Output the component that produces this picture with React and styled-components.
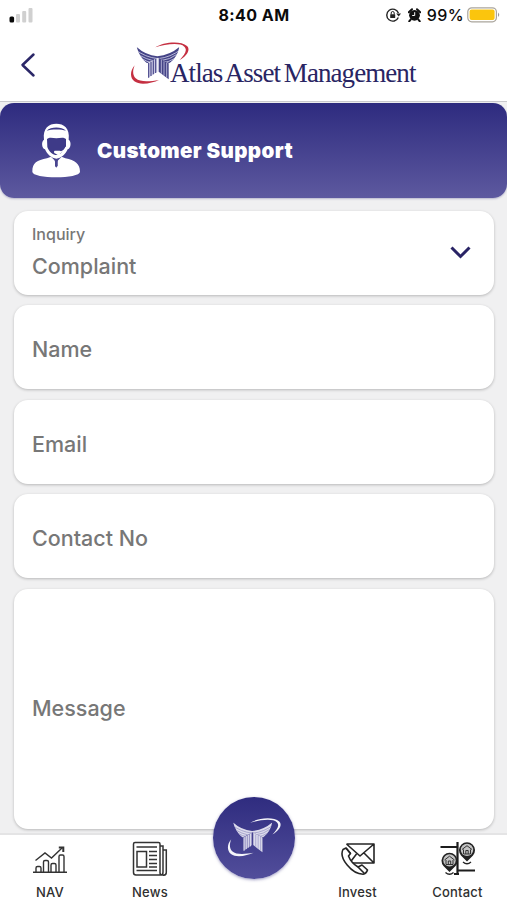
import React from "react";
import styled, { createGlobalStyle } from "styled-components";

const GlobalStyle = createGlobalStyle`
  * {
    box-sizing: border-box;
  }
  body {
    margin: 0;
    background: #f0f0f1;
    font-family: Inter, "Liberation Sans", sans-serif;
  }
  svg {
    display: block;
    flex: none;
  }
`;

const Screen = styled.div`
  width: 507px;
  height: 900px;
  display: flex;
  flex-direction: column;
  overflow: hidden;
`;

const Top = styled.header`
  height: 102px;
  flex: none;
  background: #fff;
  border-bottom: 1px solid #c9c9cd;
`;

const StatusBar = styled.div`
  height: 30px;
  display: grid;
  grid-template-columns: 1fr auto 1fr;
  align-items: center;
  padding: 0 8px 0 9px;
  color: #0b0b0b;
`;

const Time = styled.span`
  font-size: 16px;
  font-weight: 700;
  letter-spacing: 0.45px;
`;

const StatusRight = styled.div`
  display: flex;
  justify-content: flex-end;
  align-items: center;
  font-size: 16px;
  font-weight: 500;
  letter-spacing: 0.4px;
  svg:first-child {
    margin-right: 7px;
  }
  svg:last-child {
    margin-right: -1px;
  }
  span {
    margin: 0 3px 0 6px;
  }
`;

const NavBar = styled.div`
  height: 71px;
  display: flex;
  align-items: center;
  padding: 0 0 0 20px;
`;

const BackButton = styled.button`
  width: 16px;
  height: 26px;
  padding: 0;
  border: 0;
  background: none;
  margin-bottom: 1px;
`;

const Logo = styled.div`
  display: flex;
  align-items: flex-start;
  height: 50px;
  margin: 0 0 0 94px;
`;

const LogoText = styled.span`
  font-family: "Liberation Serif", serif;
  font-size: 27px;
  line-height: 28px;
  letter-spacing: -0.93px;
  word-spacing: -2px;
  color: #292563;
  white-space: nowrap;
  margin: 18px 0 0 -20px;
`;

const Banner = styled.section`
  height: 95px;
  flex: none;
  margin-top: 1px;
  display: flex;
  align-items: center;
  gap: 16px;
  padding-left: 31px;
  border-radius: 14px;
  background: linear-gradient(#2e2b7f, #5d599f);
  box-shadow: 0 1px 2px rgba(50, 45, 120, 0.3);
`;

const BannerTitle = styled.h1`
  margin: 0;
  font-size: 20.5px;
  font-weight: 900;
  letter-spacing: 0.37px;
  color: #fff;
`;

const Form = styled.main`
  flex: 1;
  display: flex;
  flex-direction: column;
  gap: 10.6px;
  padding: 13px 13.5px 0;
`;

const Field = styled.div`
  height: ${({ $tall }) => ($tall ? "240px" : "83.8px")};
  flex: none;
  display: flex;
  align-items: center;
  justify-content: space-between;
  padding: ${({ $tall }) => ($tall ? "0 23px 2px 18.5px" : "4px 23px 0 18.5px")};
  border-radius: 14px;
  background: #fff;
  box-shadow: 0 1px 3px rgba(0, 0, 0, 0.24);
  color: #777;
  font-size: 21.5px;
  font-weight: 500;
  svg {
    margin-top: -3px;
  }
`;

const Stack = styled.div`
  display: flex;
  flex-direction: column;
  line-height: 28px;
  small {
    font-size: 16px;
    line-height: 20px;
    margin-bottom: 8px;
    margin-top: -6px;
  }
`;

const TabBar = styled.nav`
  height: 67px;
  flex: none;
  display: grid;
  grid-template-columns: 100px 100px 107px 101px 99px;
  background: #fff;
  border-top: 2px solid #e4e4e5;
  position: relative;
`;

const Tab = styled.div`
  display: flex;
  flex-direction: column;
  align-items: center;
  padding-top: 6px;
  font-size: 13px;
  font-weight: 500;
  line-height: 16px;
  letter-spacing: 0.2px;
  color: #303030;
  svg {
    margin-bottom: 8px;
  }
`;

const HomeButton = styled.button`
  width: 82px;
  height: 82px;
  margin: -38px auto 0;
  padding: 0 0 0 1px;
  border: 0;
  border-radius: 50%;
  display: flex;
  align-items: center;
  justify-content: center;
  background: linear-gradient(#2f2c7f, #524e9b);
  box-shadow: 0 1px 3px rgba(70, 65, 140, 0.5);
`;

function EagleMark({ id, width, color, stripe, ring }) {
  return (
    <svg width={width} height={width * 0.75} viewBox="0 0 180 135">
      <defs>
        <clipPath id={id}>
          <path d="M20 18Q46 42 82 46Q120 42 148 18Q142 49 118 67L84 50L51 67Q29 50 20 18Z" />
        </clipPath>
      </defs>
      <g clipPath={`url(#${id})`}>
        <path d="M0 0H180V135H0Z" fill={color} />
        <path
          d="M15 25Q45 49 84 53Q122 49 153 25M17 35Q47 57 84 61Q120 57 150 35M20 45Q50 65 84 69Q117 65 148 45M26 55Q52 72 84 76Q115 72 144 55"
          fill="none"
          stroke={stripe}
          strokeWidth="2.6"
        />
      </g>
      <path d="M54 67L82 51V92L54 111Z" fill={stripe} />
      <path d="M86 51L116 67V115L86 92Z" fill={color} />
      <path d="M56 66V110M63 62V105M70 58V100M77 54V96" stroke={color} strokeWidth="3.2" />
      <path d="M94 57V98M102 61V104M110 65V110" stroke={stripe} strokeWidth="2.4" />
      <g fill={ring}>
        <path d="M76 19C98 4 151-3 171 15C183 27 169 45 149 57C163 42 174 28 163 17C148 3 103 11 76 19Z" />
        <path d="M14 73C0 89-1 110 13 121C31 135 67 126 87 117C62 121 31 125 17 112C7 102 8 88 14 73Z" />
      </g>
    </svg>
  );
}

function SignalIcon() {
  return (
    <svg width="26" height="18" viewBox="0 0 26 18">
      <rect x="0.5" y="10.5" width="4.6" height="6" rx="1.5" fill="#080808" />
      <g fill="#d0d0d0">
        <rect x="7" y="8" width="4" height="8.5" rx="1" />
        <rect x="13.2" y="5" width="4" height="11.5" rx="1" />
        <rect x="19.5" y="2" width="4" height="14.5" rx="1" />
      </g>
    </svg>
  );
}

function LockIcon() {
  return (
    <svg width="15" height="14" viewBox="0 0 15 14" fill="none" stroke="#222">
      <path d="M12.4 5A6 6 0 1 0 12.3 9.5" strokeWidth="1.4" />
      <path d="M10.2 5.5H15L12.7 8.5Z" fill="#222" stroke="none" />
      <rect x="4.2" y="6.2" width="5" height="3.8" rx="0.5" fill="#222" stroke="none" />
      <path d="M5.2 6.5V5a1.5 1.5 0 0 1 3 0v1.5" />
    </svg>
  );
}

function AlarmIcon() {
  return (
    <svg width="13" height="14" viewBox="0 0 13 14">
      <circle cx="6.5" cy="7.3" r="5.4" fill="#111" />
      <path d="M.8 4.3L4 1.2M12.2 4.3L9 1.2M2.8 11.3L1.2 13.3M10.2 11.3L11.8 13.3" stroke="#111" strokeWidth="2" strokeLinecap="round" />
      <path d="M6.7 4.2V7.5H4.2" fill="none" stroke="#fff" strokeWidth="1" />
    </svg>
  );
}

function BatteryIcon() {
  return (
    <svg width="33" height="16" viewBox="0 0 33 16">
      <rect x="0.8" y="0.8" width="28.6" height="14" rx="4" fill="#fff" stroke="#aaa59c" strokeWidth="1.2" />
      <rect x="2.6" y="2.6" width="25" height="10.4" rx="2" fill="#fbc50d" />
      <path d="M31 5.5Q33.5 7.8 31 10Z" fill="#999" />
    </svg>
  );
}

function AgentIcon() {
  return (
    <svg width="50" height="56" viewBox="0 0 150 168">
      <path d="M4 146C4 119 18 112 48 106L60 101L72 113V130H80V113L92 101L103 106C132 112 147 122 147 146C147 168 4 168 4 146Z" fill="#fff" />
      <path d="M70 108H82L79 116V129L76 134L72 129V116Z" fill="#49458f" />
      <path d="M39 50C35 14 54 2 76 2S117 14 113 50C121 54 121 75 110 79C104 93 90 107 76 107S48 93 42 79C31 75 31 54 39 50Z" fill="#fff" />
      <path d="M48 48C57 41 66 46 76 46S96 41 105 48V70C101 80 94 88 86 93C92 92 92 84 86 83H71C67 86 69 91 74 92L80 96C68 98 53 86 49 72Z" fill="#3e3a88" />
      <path d="M47 23C59 11 91 10 105 23C91 18 61 18 47 23Z" fill="#3e3a88" />
      <path d="M105 73Q99 87 84 88" fill="none" stroke="#fff" strokeWidth="4" />
    </svg>
  );
}

function NavChartIcon() {
  return (
    <svg width="36" height="35" viewBox="0 0 36 35" fill="none" stroke="#333" strokeWidth="1.4">
      <path d="M1 31.3H35M4 31V27Q4 25.5 5.5 25.5H7.5Q9 25.5 9 27V31M11.5 31V21Q11.5 19.5 13 19.5H15Q16.5 19.5 16.5 21V31M19 31V24Q19 22.5 20.5 22.5H22.5Q24 22.5 24 24V31M27 31V15.5Q27 14 28.5 14H30.5Q32 14 32 15.5V31" />
      <path d="M3.5 19.5L13 12L19.5 17L30 7" />
      <path d="M26.8 6.5H31.3V11" strokeWidth="2" />
    </svg>
  );
}

function NewsIcon() {
  return (
    <svg width="36" height="35" viewBox="0 0 36 35" fill="none" stroke="#333" strokeWidth="1.5">
      <path d="M3 1.5H26.5Q28 1.5 28 3V32Q28 34 31 34H4Q1.5 34 1.5 31.5V3Q1.5 1.5 3 1.5ZM28 5H31V31Q31 34 29 34M31 9H34.3V31.5Q34.3 34.3 31 34.3" />
      <rect x="5" y="10.5" width="9.5" height="15.5" />
      <path d="M4.5 6H25M17 10.5H25M17 14.5H25M17 18.5H25M17 22.5H25M17 26H25M4.5 29.5H25" />
    </svg>
  );
}

function InvestIcon() {
  return (
    <svg width="36" height="35" viewBox="0 0 36 35" fill="none" stroke="#252525" strokeWidth="1.6" strokeLinejoin="round">
      <path d="M6.5 3H34V22H10L8.5 16.5M6.5 3L20 15L34 3M10 21.5L16.5 13M34 22L24 12" />
      <path d="M6 7L3 8.5C-1.5 17 12 33 23 33.2Q26.5 32.5 27.5 29L22 24L18 26C13 23 10 19 8.5 15L10.5 12.5Z" fill="#fff" />
      <path d="M6 7L10.5 12.5M18 26L24 32" />
    </svg>
  );
}

function MapPin({ x, y }) {
  return (
    <g transform={`translate(${x} ${y})`}>
      <path d="M0 17L-6 11A8 8 0 1 1 6 11Z" fill="#222" />
      <circle cy="5.4" r="6.2" fill="#c4c4c4" />
      <path d="M-5 5L0 1.2L5 5M-3.5 5V9.5H3.5V5M-1.2 9.5V6H1.2V9.5" fill="none" stroke="#333" strokeWidth="1" />
      <path d="M-4 17.5Q0 21 4 17.5" fill="none" stroke="#222" strokeWidth="1.3" />
    </g>
  );
}

function ContactIcon() {
  return (
    <svg width="36" height="35" viewBox="0 0 36 35">
      <path d="M.5 6H18.5M17.5 1V33M17.5 29.5H35M14 33H19" fill="none" stroke="#1d1d1d" strokeWidth="2.2" />
      <MapPin x={9.5} y={14} />
      <MapPin x={27} y={3.5} />
    </svg>
  );
}

export default function App() {
  return (
    <>
      <GlobalStyle />
      <Screen>
        <Top>
          <StatusBar>
            <SignalIcon />
            <Time>8:40 AM</Time>
            <StatusRight>
              <LockIcon />
              <AlarmIcon />
              <span>99%</span>
              <BatteryIcon />
            </StatusRight>
          </StatusBar>
          <NavBar>
            <BackButton aria-label="Back">
              <svg width="16" height="26" viewBox="0 0 16 26">
                <path d="M13.5 2.5L2.5 13L13.5 23.5" fill="none" stroke="#2b2768" strokeWidth="2.5" strokeLinecap="round" strokeLinejoin="round" />
              </svg>
            </BackButton>
            <Logo>
              <EagleMark id="logo" width={60} color="#454487" stripe="#c9c8e4" ring="#c52f41" />
              <LogoText>Atlas Asset Management</LogoText>
            </Logo>
          </NavBar>
        </Top>
        <Banner>
          <AgentIcon />
          <BannerTitle>Customer Support</BannerTitle>
        </Banner>
        <Form>
          <Field>
            <Stack>
              <small>Inquiry</small>
              Complaint
            </Stack>
            <svg width="21" height="14" viewBox="0 0 21 14">
              <path d="M1.5 1.5L10.5 10.5L19.5 1.5" fill="none" stroke="#292365" strokeWidth="3" />
            </svg>
          </Field>
          <Field>Name</Field>
          <Field>Email</Field>
          <Field>Contact No</Field>
          <Field $tall>Message</Field>
        </Form>
        <TabBar>
          <Tab>
            <NavChartIcon />
            NAV
          </Tab>
          <Tab>
            <NewsIcon />
            News
          </Tab>
          <HomeButton aria-label="Home">
            <EagleMark id="home" width={55} color="#dddcec" stripe="#9a97c5" ring="#f5f5fa" />
          </HomeButton>
          <Tab>
            <InvestIcon />
            Invest
          </Tab>
          <Tab>
            <ContactIcon />
            Contact
          </Tab>
        </TabBar>
      </Screen>
    </>
  );
}
